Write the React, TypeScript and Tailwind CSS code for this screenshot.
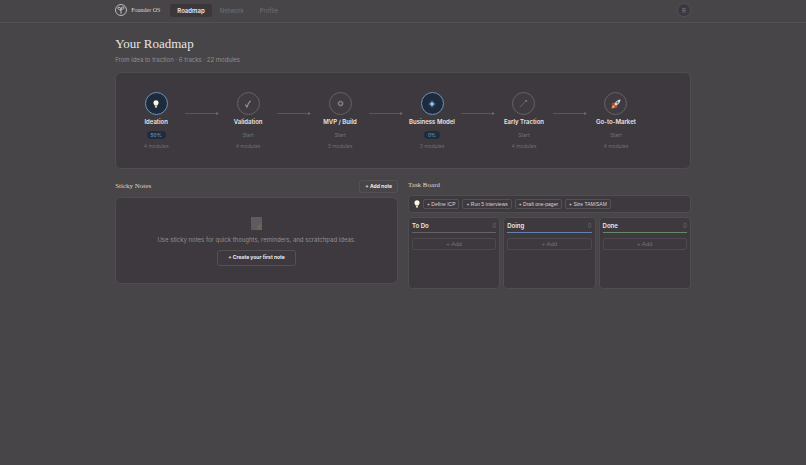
import type { ReactNode } from "react"

const Bulb = () => (
  <svg viewBox="0 0 10 14" className="h-2 w-[6px]" aria-hidden="true">
    <path d="M5 .5a4.500 4.500 0 0 1 4.500 4.500c0 2-1.600 3-2 4.600h-5C2 8 .5 7 .5 5A4.500 4.500 0 0 1 5 .5Z" fill="#fff6dc" />
    <path d="M3.200 10h3.600v2.600l-1 1H4.200l-1-1Z" fill="#d8d5cf" />
  </svg>
)

const Check = () => (
  <svg viewBox="0 0 12 12" className="size-2" aria-hidden="true">
    <path d="M2 6.800 4.400 10.600C5.600 7 7.400 3.600 9.800 1.200" fill="none" stroke="#8f8c90" strokeWidth="1.900" />
  </svg>
)

const Gear = () => (
  <svg viewBox="0 0 12 12" className="size-[7px]" aria-hidden="true">
    <circle cx="6" cy="6" r="3.400" fill="none" stroke="#848185" strokeWidth="2.200" />
    <circle cx="6" cy="6" r="5" fill="none" stroke="#7c797d" strokeWidth="1" strokeDasharray="1.960 1.960" />
  </svg>
)

const Diamond = () => (
  <svg viewBox="0 0 12 12" className="size-2" aria-hidden="true">
    <path d="M6 .5 11.500 6 6 11.500.5 6Z" fill="#3f658f" />
    <path d="M6 2.600 7.300 4.700 9.400 6 7.300 7.300 6 9.400 4.700 7.300 2.600 6 4.700 4.700Z" fill="#b7d2ec" />
  </svg>
)

const Trend = () => (
  <svg viewBox="0 0 12 12" className="size-[9px]" aria-hidden="true">
    <path d="M1 11 10 2" stroke="#6d6a6e" strokeWidth="1.100" />
    <path d="M7.600 1.200h3.200v3.200Z" fill="#7c797d" />
  </svg>
)

const Rocket = () => (
  <svg viewBox="0 0 20 20" className="size-[10px]" aria-hidden="true">
    <path d="M8 7 3 8 1 12l5-1ZM13 12l-1 5-4 2 1-5Z" fill="#c94b35" />
    <path d="M19 1c-5 0-9 3-13 10l3 3c7-4 10-8 10-13Z" fill="#d5d8dc" />
    <path d="M6 10 10 14 8 16 4 12Z" fill="#b8402f" />
    <circle cx="13" cy="7" r="2" fill="#526577" />
    <path d="M5 12c-3 0-3 4-4 7 3-1 7-1 7-4Z" fill="#f2a43a" />
  </svg>
)

const tracks: { name: string; icon: ReactNode; progress?: string; modules: number }[] = [
  { name: "Ideation", icon: <Bulb />, progress: "50%", modules: 4 },
  { name: "Validation", icon: <Check />, modules: 4 },
  { name: "MVP / Build", icon: <Gear />, modules: 3 },
  { name: "Business Model", icon: <Diamond />, progress: "0%", modules: 3 },
  { name: "Early Traction", icon: <Trend />, modules: 4 },
  { name: "Go-to-Market", icon: <Rocket />, modules: 4 },
]

const suggestions = ["Define ICP", "Run 5 interviews", "Draft one-pager", "Size TAM/SAM"]

const columns = [
  { name: "To Do", line: "bg-[#666367]" },
  { name: "Doing", line: "bg-[#6382ad]" },
  { name: "Done", line: "bg-[#668a66]" },
]

function Header() {
  return (
    <header className="border-b border-[#535154]">
      <div className="mx-auto flex h-[22px] w-5/7 items-center pb-[2px]">
        <a href="#" className="flex items-center gap-1 font-['Liberation_Serif',serif] text-[6px] text-[#d8d6d7]">
          <svg viewBox="0 0 24 24" className="size-3" fill="none" stroke="#c9c7c9" aria-hidden="true">
            <circle cx="12" cy="12" r="11" strokeWidth="1.800" />
            <path d="M12 19.500V10" strokeWidth="2" />
            <path d="M12 12C8 12.500 5.500 10.500 6 7c3-1.500 6 0 6 5ZM12 10c0-4 3-5 6-3.500.5 3-2 5-6 3.500Z" strokeWidth="1.800" />
          </svg>
          Founder OS
        </a>
        <nav className="ml-[10px] flex items-center text-[6px]">
          <a href="#" className="rounded-[3px] bg-[#3b373b] px-[7px] py-[2px] font-semibold text-[#eceaeb]">Roadmap</a>
          <a href="#" className="px-2 text-[#717075]">Network</a>
          <a href="#" className="px-2 text-[#717075]">Profile</a>
        </nav>
        <button aria-label="Account" className="ml-auto flex size-[14px] items-center justify-center rounded-full border border-[#545155] bg-[#3d383d] text-[6px] text-[#858286]">
          R
        </button>
      </div>
    </header>
  )
}

function Roadmap() {
  return (
    <section className="flex h-[97px] rounded-md border border-[#504d51] bg-[#3e393e] pt-[19px] pr-[22px]">
      {tracks.map((t, i) => (
        <div key={t.name} className="flex flex-1 items-start">
          <div className="flex w-20 shrink-0 flex-col items-center whitespace-nowrap">
            <div
              className={`flex size-[23px] items-center justify-center rounded-full border ${
                t.progress ? "border-[#7592b3] bg-[#1d2b3c]" : "border-[#656266] bg-[#403b40]"
              }`}
            >
              {t.icon}
            </div>
            <h2 className="mt-[2px] text-[6px] leading-[10px] font-semibold text-[#e6e4e5]">{t.name}</h2>
            <span
              className={`mt-1 rounded-full px-1 text-[5px] leading-2 ${
                t.progress ? "bg-[#1e2d3e] text-[#7fa3c9]" : "text-[#777478]"
              }`}
            >
              {t.progress ?? "Start"}
            </span>
            <span className="mt-[3px] text-[5px] leading-2 text-[#706d71]">{t.modules} modules</span>
          </div>
          {i < tracks.length - 1 && (
            <svg viewBox="0 0 34 4" className="mt-5 -mr-10 -ml-[11px] h-1 w-[34px] shrink-0" aria-hidden="true">
              <path d="M0 1.500h32" stroke="#5a575b" />
              <path d="M31 0 34 1.500 31 3Z" fill="#6d6a6e" />
            </svg>
          )}
        </div>
      ))}
    </section>
  )
}

function StickyNotes() {
  return (
    <section>
      <div className="flex h-[18px] items-center justify-between">
        <h2 className="font-['Liberation_Serif',serif] text-[7px] text-[#d8d6d7]">Sticky Notes</h2>
        <button className="h-[13px] rounded-[3px] border border-[#545155] px-[5px] text-[5px] leading-[10px] font-bold text-[#eceaeb]">
          + Add note
        </button>
      </div>
      <div className="mt-[2px] flex h-[87px] flex-col items-center rounded-md border border-[#504d51] bg-[#3e393e] pt-[19px]">
        <svg viewBox="0 0 11 13" className="h-[13px] w-[11px]" aria-hidden="true">
          <path d="M0 0h11v13H0Z" fill="#5e5b5e" />
          <path d="M5 12 11 7v6H5Z" fill="#67625f" />
          <path d="m6 10 3-3 1 1-3 3Z" fill="#786958" />
        </svg>
        <p className="mt-1 text-[6px] leading-3 text-[#918e92]">
          Use sticky notes for quick thoughts, reminders, and scratchpad ideas.
        </p>
        <button className="mt-1 h-4 rounded-[3px] border border-[#545155] px-[10px] text-[5px] font-bold text-[#eceaeb]">
          + Create your first note
        </button>
      </div>
    </section>
  )
}

function TaskBoard() {
  return (
    <section>
      <h2 className="h-[18px] font-['Liberation_Serif',serif] text-[7px] leading-4 text-[#d8d6d7]">Task Board</h2>
      <div className="flex h-[18px] items-center gap-[3px] rounded-[4px] border border-[#504d51] bg-[#3e393e] px-[5px]">
        <Bulb />
        {suggestions.map((s) => (
          <button key={s} className="h-[10px] rounded-[2px] border border-[#545155] px-[3px] font-['Liberation_Sans',sans-serif] text-[5px] leading-2 whitespace-nowrap text-[#d8d6d7]">
            + {s}
          </button>
        ))}
      </div>
      <div className="mt-1 grid grid-cols-3 gap-[3px]">
        {columns.map((c) => (
          <div key={c.name} className="h-[72px] rounded-[4px] border border-[#504d51] bg-[#3e393e] px-[3px] pt-[3px]">
            <div className="flex h-[9px] items-center justify-between">
              <h3 className="text-[6px] font-semibold text-[#eceaeb]">{c.name}</h3>
              <span className="text-[6px] text-[#6d6a6e]">0</span>
            </div>
            <div className={`mt-[2px] h-px ${c.line}`} />
            <button className="mt-[5px] block h-3 w-full rounded-[2px] border border-[#4d494e] font-['Liberation_Sans',sans-serif] text-[6px] leading-[10px] text-[#757276]">
              + Add
            </button>
          </div>
        ))}
      </div>
    </section>
  )
}

export default function App() {
  return (
    <div className="min-h-screen bg-[#474548] font-['Inter',sans-serif]">
      <Header />
      <main className="mx-auto w-5/7 pt-3">
        <h1 className="font-['Liberation_Serif',serif] text-[13px] leading-[18px] text-[#e6e4e5]">Your Roadmap</h1>
        <p className="mt-[2px] mb-[7px] text-[6px] leading-[10px] text-[#918e92]">From idea to traction · 6 tracks · 22 modules</p>
        <Roadmap />
        <div className="mt-2 grid grid-cols-2 gap-[10px]">
          <StickyNotes />
          <TaskBoard />
        </div>
      </main>
    </div>
  )
}
